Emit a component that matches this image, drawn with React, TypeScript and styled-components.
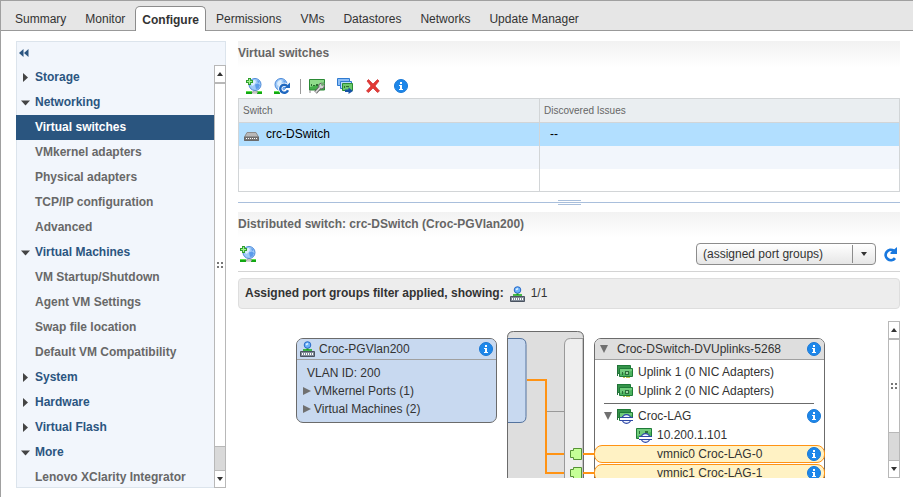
import React, { useState } from "react";
import styled, { createGlobalStyle, css } from "styled-components";

const GlobalStyle = createGlobalStyle`
  * { box-sizing: border-box; }
  body { margin: 0; background: #fff; }
  body, button, select, table {
    font-family: "Liberation Sans", Arial, sans-serif;
    font-size: 12px;
    color: #333;
  }
  button { margin: 0; padding: 0; border: 0; background: none; cursor: pointer; }
  ul, h2 { margin: 0; padding: 0; list-style: none; }
`;

/* ---------- Icons ---------- */

const Svg = styled.svg`
  display: block;
  flex: none;
`;

const Globe = () => (
  <>
    <circle cx="9" cy="6.5" r="6" fill="#9fcaf8" stroke="#4a88d8" />
    <path d="M5 6q1-4 4-4l1 2-2 3-2 1z" fill="#dceefe" />
    <path d="M9 6.5l3-1 2 1.500-1.500 3.500-2.500.5z" fill="#5b9bea" />
    <path d="M11 2l3 2-2 1z" fill="#5b9bea" />
  </>
);

const GlobeBase = () => (
  <>
    <path d="M0 13h6v3H0zM11 13h5v3h-5z" fill="#12a812" />
    <path d="M0 13h6v1H0zM11 13h5v1h-5z" fill="#5be04c" />
    <path d="M6 15q0-2 3-2t2.500 2z" fill="#e8e8e8" stroke="#888" strokeWidth=".7" />
  </>
);

const AddSwitchIcon = () => (
  <Svg width="16" height="16" viewBox="0 0 16 16" aria-hidden="true">
    <Globe />
    <GlobeBase />
    <path d="M3.500 0v7M0 3.500h7" stroke="#2f9d2c" strokeWidth="3" />
    <path d="M3.500 1v5M1 3.500h5" stroke="#a2f592" strokeWidth="1.200" />
  </Svg>
);

const RefreshSwitchIcon = () => (
  <Svg width="16" height="16" viewBox="0 0 16 16" aria-hidden="true">
    <g transform="translate(-2 0)"><Globe /></g>
    <path d="M0 13h6v3H0z" fill="#12a812" />
    <path d="M0 13h6v1H0z" fill="#5be04c" />
    <path d="M14 12.200a4 4 0 1 1-.8-4.200" fill="none" stroke="#fff" strokeWidth="4.200" />
    <path d="M14 12.200a4 4 0 1 1-.8-4.200" fill="none" stroke="#1f68c0" strokeWidth="2.400" />
    <path d="M16 4.500V10h-5.500z" fill="#1f68c0" />
  </Svg>
);

const AdapterIcon = () => (
  <Svg width="16" height="16" viewBox="0 0 16 16" aria-hidden="true">
    <path d="M.5 1.500h15V12H.5z" fill="#44ae4a" stroke="#2b8a35" />
    <path d="M1 2h14v3L1 9z" fill="#8fdb8a" />
    <path d="M2 6h1v2H2zM4 7h2v1H4zM7 6h2v2H7z" fill="#2d6e32" />
    <path d="M1 12v3" stroke="#888" />
    <path d="m6.500 14.500 4.500-5" stroke="#666" strokeWidth="3.400" />
    <circle cx="12.500" cy="8" r="2.800" fill="#d5d5d5" stroke="#666" />
    <path d="m6.500 14.500 4.500-5" stroke="#ddd" strokeWidth="1.600" />
    <path d="m12.500 7.500 2.500-3" stroke="#6faf70" strokeWidth="2" />
  </Svg>
);

const MigrateIcon = () => (
  <Svg width="16" height="16" viewBox="0 0 16 16" aria-hidden="true">
    <path d="M.5.500h12v7H.5z" fill="#8cbdf5" stroke="#2e7ad0" />
    <path d="M3.500 3.500h11v7h-11z" fill="#b9dafd" stroke="#2e7ad0" />
    <path d="M5.500 5.500h10v7h-10z" fill="#6bc96c" stroke="#2b8a35" />
    <path d="M7 8h1v2H7zM9 8h3v1H9z" fill="#2d6e32" />
    <path d="M8 11.500h3.500V9.500l4.500 3.500-4.500 3v-2H8z" fill="#1653a5" />
  </Svg>
);

const RemoveIcon = () => (
  <Svg width="14" height="14" viewBox="0 0 14 14" aria-hidden="true">
    <path d="m1 2 1.500-1.500L7 5l4.500-4.500L13 2 9 7l4.500 5-2 1.500L7 9l-4.500 4.500-2-1.500L5 7z" fill="#e33a36" stroke="#cc2c2c" strokeWidth=".7" />
  </Svg>
);

const InfoIcon = () => (
  <Svg width="14" height="14" viewBox="0 0 14 14" aria-hidden="true">
    <circle cx="7" cy="7" r="6.500" fill="#1d87ea" stroke="#1a78d4" />
    <path d="M6 3h2v2H6zM5 6h3v4h1v1H5v-1h1V7H5z" fill="#fff" />
  </Svg>
);

const SwitchIcon = () => (
  <Svg width="15" height="9" viewBox="0 0 15 9" aria-hidden="true">
    <path d="M3 .5h9l2.500 4.500v3.500H.5V5z" fill="#b9b9b9" stroke="#8c8c8c" />
    <path d="M.5 5h14v3.500H.5z" fill="#777" stroke="#6a6a6a" />
    <path d="M2 6.500h11" stroke="#fff" strokeDasharray="1 1" />
  </Svg>
);

const PortGroupIcon = () => (
  <Svg width="15" height="16" viewBox="0 0 15 16" aria-hidden="true">
    <circle cx="7.500" cy="4" r="3.300" fill="#6bb1fa" stroke="#2869c6" />
    <path d="m5.500 3 2-1 1 1-2 1.500z" fill="#e3f3ff" />
    <path d="M7.500 7.500V9" stroke="#278b2b" strokeWidth="2" />
    <path d="M3 9h9" stroke="#12a914" strokeWidth="1.500" />
    <path d="M.5 10.500h14v5H.5z" fill="#818b98" stroke="#4a5360" />
    <path d="M2 13h11" stroke="#fff" strokeWidth="2" strokeDasharray="1 1" />
  </Svg>
);

const RefreshIcon = () => (
  <Svg width="15" height="15" viewBox="0 0 15 15" aria-hidden="true">
    <path d="M12 11.200A5.200 5.200 0 1 1 10.800 3.700" fill="none" stroke="#1878df" strokeWidth="2.800" />
    <path d="M14 0v7H7.500V5.500z" fill="#1878df" />
  </Svg>
);

const NicIcon = ({ lag = false, single = false }: { lag?: boolean; single?: boolean }) => (
  <Svg width="16" height="16" viewBox="0 0 16 16" aria-hidden="true">
    {!single && (
      <>
        <path d="M.5 1.500h13v8H.5z" fill="#35944a" stroke="#1f7a38" />
        <path d="M.5 1v11" stroke="#246e39" />
      </>
    )}
    <path d={single ? "M.5 1.500h15v10H.5z" : "M2.500 4.500h13v8h-13z"} fill="#4db45f" stroke="#1f7a38" />
    <path d={single ? "M1 2h14v3L1 9z" : "M3 5h12v2L3 10z"} fill="#8bdc8f" opacity=".6" />
    {single ? (
      <path d="M3 4h1v3H3zM9 4h3v2H9z" fill="#2d6e3a" />
    ) : (
      <>
        <path d="M8 7h4v4H8zM5 8h1v3H5z" fill="#2d6e3a" />
        <path d="M9 8h2v2H9z" fill="#9fd6a2" />
      </>
    )}
    {!lag && <path d="M6 13h2v1H6zM9 13h4v1H9z" fill="#b9c24a" />}
    {lag && (
      <>
        <circle cx="9.500" cy="11" r="4.300" fill="#f1f5ff" stroke="#2f48a6" strokeWidth="1.200" />
        <path d="M3 9.500h13v3H3z" fill="#fff" />
        <path d="M3 9.500h13M3 12.500h13" stroke="#2f48a6" />
      </>
    )}
  </Svg>
);

const Caret = ({ open = false }: { open?: boolean }) => (
  <Svg width="9" height="9" viewBox="0 0 9 9" aria-hidden="true">
    <path d={open ? "M0 2.500h9L4.500 7.500z" : "M2 0v9l5-4.500z"} fill="#444" />
  </Svg>
);

const CardCaret = ({ open = false }: { open?: boolean }) => (
  <Svg width="8" height="8" viewBox="0 0 8 8" aria-hidden="true">
    <path d={open ? "M0 0h8L4 8z" : "M0 0v8l8-4z"} fill="#707070" />
  </Svg>
);

const SmallArrow = ({ up = false }: { up?: boolean }) => (
  <Svg width="6" height="4" viewBox="0 0 6 4" aria-hidden="true">
    <path d={up ? "M0 4h6L3 0z" : "M0 0h6L3 4z"} fill="#333" />
  </Svg>
);

/* ---------- Frame and tabs ---------- */

const Frame = styled.div`
  display: flex;
  flex-direction: column;
  height: 100vh;
  overflow: hidden;
  border: solid #a0a0a0;
  border-width: 1px 0 0 1px;
`;

const TabBar = styled.nav`
  display: flex;
  align-items: flex-end;
  flex: none;
  height: 30px;
  padding-left: 5px;
  background: #e6e6e6;
  border-bottom: 1px solid #999;
`;

const Tab = styled.button<{ $active: boolean }>`
  height: 25px;
  padding: 2px 8px 0;
  border: 1px solid transparent;
  border-bottom: 0;
  white-space: nowrap;
  margin-right: 1px;
  ${(p) =>
    p.$active &&
    css`
      margin-bottom: -1px;
      padding: 2px 6px 0;
      font-weight: bold;
      background: #fff;
      border-color: #8c8c8c;
      border-radius: 5px 5px 0 0;
    `}
`;

const Body = styled.div`
  display: flex;
  flex: 1;
  min-height: 0;
  gap: 12px;
  padding: 10px 13px 9px 15px;
`;

/* ---------- Sidebar ---------- */

const Sidebar = styled.aside`
  display: flex;
  flex-direction: column;
  flex: none;
  width: 210px;
  background: #f2f6fc;
  border: 1px solid #dce4ec;
`;

const Collapse = styled.button`
  display: flex;
  align-items: center;
  flex: none;
  height: 23px;
  padding: 0 0 2px 2px;
`;

const TreeArea = styled.div`
  display: flex;
  flex: 1;
  min-height: 0;
  margin: 0 -1px -1px;
`;

const Tree = styled.ul`
  flex: 1;
  overflow: hidden;
`;

const TreeItem = styled.button<{ $group: boolean; $selected: boolean }>`
  display: grid;
  grid-template-columns: 10px 1fr;
  gap: 4px;
  align-items: center;
  width: 100%;
  height: 25px;
  padding-left: 5px;
  text-align: left;
  font-weight: bold;
  white-space: nowrap;
  color: ${(p) => (p.$selected ? "#fff" : p.$group ? "#2b5580" : "#686868")};
  background: ${(p) => (p.$selected ? "#2a557f" : "transparent")};

  span {
    grid-column: 2;
    padding-bottom: 2px;
  }
`;

/* ---------- Scrollbar ---------- */

const ScrollTrack = styled.div`
  display: flex;
  flex-direction: column;
  flex: none;
  width: 12px;
  background: #d9d9d9;
  border: solid #b8b8b8;
  border-width: 0 1px;
`;

const ScrollButton = styled.button`
  display: grid;
  place-items: center;
  flex: none;
  height: 18px;
  background: #fff;
  border: solid #b8b8b8;
  border-width: 1px 0;
`;

const ScrollThumb = styled.div<{ $rest: number }>`
  display: grid;
  place-items: center;
  flex: 1;
  margin-bottom: ${(p) => p.$rest}px;
  background: #fff;
  border: solid #b8b8b8;
  border-width: 1px 0;
`;

const Scrollbar = ({ rest }: { rest: number }) => (
  <ScrollTrack>
    <ScrollButton aria-label="Scroll up"><SmallArrow up /></ScrollButton>
    <ScrollThumb $rest={rest}>
      <Svg width="6" height="6" viewBox="0 0 6 6" aria-hidden="true">
        <path d="M0 0h2v2H0zM4 0h2v2H4zM0 4h2v2H0zM4 4h2v2H4z" fill="#777" />
      </Svg>
    </ScrollThumb>
    <ScrollButton aria-label="Scroll down"><SmallArrow /></ScrollButton>
  </ScrollTrack>
);

/* ---------- Main panel ---------- */

const Main = styled.main`
  display: flex;
  flex-direction: column;
  flex: 1;
  min-width: 0;
  padding-bottom: 10px;
`;

const Heading = styled.h2`
  flex: none;
  height: 26px;
  line-height: 24px;
  font-size: 12px;
  font-weight: bold;
  color: #666;
  background: linear-gradient(#f2f2f2, #fff);
`;

const Toolbar = styled.div`
  display: flex;
  align-items: center;
  flex: none;
  gap: 12px;
  height: 31px;
  padding: 7px 8px 0;
`;

const ToolButton = styled.button`
  display: grid;
  place-items: center;
  flex: none;
  width: 16px;
  height: 16px;
`;

const Separator = styled.span`
  width: 1px;
  height: 15px;
  margin-right: -4px;
  margin-left: -2px;
  background: #999;
`;

const Grid = styled.table`
  flex: none;
  width: 100%;
  table-layout: fixed;
  border-collapse: collapse;
  border: 1px solid #d2d5d7;

  th, td {
    height: 23px;
    padding: 0 5px;
    text-align: left;
    border-right: 1px solid #d2d5d7;
  }
  th {
    height: 24px;
    padding: 0 4px;
    font-size: 10px;
    font-weight: normal;
    color: #666;
    background: #eaeef1;
    border-bottom: 1px solid #d2d5d7;
  }
  td + td { padding-left: 10px; }
`;

const SwitchColumn = styled.col`
  width: 301px;
`;

const GridRow = styled.tr<{ $tone: string }>`
  background: ${(p) => p.$tone};

  td { color: #000; }
`;

const SwitchName = styled.div`
  display: flex;
  align-items: center;
  gap: 7px;

  svg { margin-top: 4px; }
`;

const Splitter = styled.div`
  display: grid;
  place-items: center;
  flex: none;
  height: 20px;
  background: linear-gradient(#a9bfdc, #a9bfdc) 0 10px / 100% 1px no-repeat;
`;

const SplitterGrip = styled.span`
  width: 23px;
  height: 5px;
  margin-top: 1px;
  border: solid #a9bfdc;
  border-width: 1px 0;
`;

const FilterTools = styled.div`
  display: flex;
  align-items: center;
  flex: none;
  height: 34px;
  padding: 0 2px 1px;
  gap: 6px;
  border-bottom: 1px solid #d4d4d4;
`;

const SelectBox = styled.div`
  display: grid;
  grid-template-columns: 1fr 23px;
  width: 180px;
  height: 22px;
  margin-left: auto;
  border: 1px solid #8c8c8c;
  border-radius: 4px;
  background: linear-gradient(#fff, #e6e6e6);

  select {
    grid-area: 1 / 1 / 2 / 3;
    padding: 0 0 0 6px;
    border: 0;
    appearance: none;
    background: none;
  }
  > span {
    grid-area: 1 / 2;
    display: grid;
    place-items: center;
    margin: 1px 0;
    border-left: 1px solid #8c8c8c;
    pointer-events: none;
  }
`;

const FilterBar = styled.div`
  display: flex;
  align-items: center;
  flex: none;
  height: 31px;
  margin: 6px 0 12px;
  padding-left: 6px;
  gap: 6px;
  border: 1px solid #dedede;
  border-radius: 4px;
  background: #ededed;

  strong, span { padding-bottom: 2px; }
`;

/* ---------- Topology diagram ---------- */

const DiagramArea = styled.section`
  display: flex;
  flex: 1;
  min-height: 0;
`;

const Canvas = styled.div`
  position: relative;
  flex: 1;
  overflow: hidden;
`;

const Wires = styled.svg`
  position: absolute;
  left: 269px;
  top: 10px;
`;

const Card = styled.div<{ $tone: string }>`
  position: absolute;
  border: 1px solid #6b6b6b;
  border-radius: 7px;
  background: ${(p) => p.$tone};
`;

const GroupCard = styled(Card)`
  left: 58px;
  top: 17px;
  width: 201px;
  padding-bottom: 4px;
`;

const UplinkCard = styled(Card)`
  left: 356px;
  top: 17px;
  width: 231px;
  height: 200px;
`;

const CardHeader = styled.div<{ $tone: string }>`
  display: flex;
  align-items: center;
  height: 21px;
  padding: 0 2px 0 3px;
  gap: 4px;
  background: ${(p) => p.$tone};
  border-bottom: 1px solid #a0a0a0;
  border-radius: 6px 6px 0 0;

  > :last-child { margin-left: auto; }
`;

const UplinkHeader = styled(CardHeader)`
  gap: 9px;
  padding-left: 5px;
`;

const VlanLabel = styled.div`
  padding: 5px 10px 0;
  line-height: 17px;
`;

const Expander = styled.button`
  display: flex;
  align-items: center;
  gap: 3px;
  height: 18px;
  padding: 0 0 1px 6px;
`;

const UplinkRow = styled.div<{ $indent: number }>`
  display: flex;
  align-items: center;
  gap: 5px;
  height: 19px;
  padding: 0 2px 0 ${(p) => p.$indent}px;

  > button:last-child { margin-left: auto; }
`;

const UplinkList = styled.div`
  padding: 2px 0 3px;
`;

const Rule = styled.div`
  height: 1px;
  margin: 0 10px 2px 9px;
  background: #6b6b6b;
`;

const NicPill = styled.div`
  display: flex;
  align-items: center;
  justify-content: space-between;
  height: 18px;
  margin: 1px -1px 0;
  padding: 0 2px 0 62px;
  border: 1px solid #ff9314;
  border-radius: 8px;
  background: #fff2c4;
`;

const InfoButton = ({ label }: { label: string }) => (
  <ToolButton aria-label={label}><InfoIcon /></ToolButton>
);

/* ---------- Data ---------- */

const tabs = ["Summary", "Monitor", "Configure", "Permissions", "VMs", "Datastores", "Networks", "Update Manager"];

const tree: { label: string; group?: boolean; open?: boolean }[] = [
  { label: "Storage", group: true },
  { label: "Networking", group: true, open: true },
  { label: "Virtual switches" },
  { label: "VMkernel adapters" },
  { label: "Physical adapters" },
  { label: "TCP/IP configuration" },
  { label: "Advanced" },
  { label: "Virtual Machines", group: true, open: true },
  { label: "VM Startup/Shutdown" },
  { label: "Agent VM Settings" },
  { label: "Swap file location" },
  { label: "Default VM Compatibility" },
  { label: "System", group: true },
  { label: "Hardware", group: true },
  { label: "Virtual Flash", group: true },
  { label: "More", group: true, open: true },
  { label: "Lenovo XClarity Integrator" },
];

export default function App() {
  const [tab, setTab] = useState("Configure");
  const [page, setPage] = useState("Virtual switches");

  return (
    <Frame>
      <GlobalStyle />
      <TabBar>
        {tabs.map((name) => (
          <Tab key={name} $active={name === tab} onClick={() => setTab(name)}>{name}</Tab>
        ))}
      </TabBar>
      <Body>
        <Sidebar>
          <Collapse aria-label="Collapse sidebar">
            <Svg width="10" height="8" viewBox="0 0 10 8" aria-hidden="true">
              <path d="M4.500 0v8L0 4zM9.500 0v8L5 4z" fill="#2b5580" />
            </Svg>
          </Collapse>
          <TreeArea>
            <Tree>
              {tree.map((item) => (
                <li key={item.label}>
                  <TreeItem
                    $group={!!item.group}
                    $selected={item.label === page}
                    onClick={() => !item.group && setPage(item.label)}
                  >
                    {item.group && <Caret open={item.open} />}
                    <span>{item.label}</span>
                  </TreeItem>
                </li>
              ))}
            </Tree>
            <Scrollbar rest={23} />
          </TreeArea>
        </Sidebar>

        <Main>
          <Heading>Virtual switches</Heading>
          <Toolbar>
            <ToolButton aria-label="Add host networking"><AddSwitchIcon /></ToolButton>
            <ToolButton aria-label="Refresh networking"><RefreshSwitchIcon /></ToolButton>
            <Separator />
            <ToolButton aria-label="Manage physical adapters"><AdapterIcon /></ToolButton>
            <ToolButton aria-label="Migrate networking"><MigrateIcon /></ToolButton>
            <ToolButton aria-label="Remove switch"><RemoveIcon /></ToolButton>
            <InfoButton label="Switch details" />
          </Toolbar>
          <Grid>
            <colgroup>
              <SwitchColumn />
              <col />
            </colgroup>
            <thead>
              <tr><th>Switch</th><th>Discovered Issues</th></tr>
            </thead>
            <tbody>
              <GridRow $tone="#b2dfff">
                <td><SwitchName><SwitchIcon />crc-DSwitch</SwitchName></td>
                <td>--</td>
              </GridRow>
              <GridRow $tone="#f2f6fc"><td /><td /></GridRow>
              <GridRow $tone="#fff"><td /><td /></GridRow>
            </tbody>
          </Grid>
          <Splitter><SplitterGrip /></Splitter>
          <Heading>Distributed switch: crc-DSwitch (Croc-PGVlan200)</Heading>
          <FilterTools>
            <ToolButton aria-label="Add host networking"><AddSwitchIcon /></ToolButton>
            <SelectBox>
              <select aria-label="Port group filter">
                <option>(assigned port groups)</option>
              </select>
              <span><SmallArrow /></span>
            </SelectBox>
            <ToolButton aria-label="Refresh"><RefreshIcon /></ToolButton>
          </FilterTools>
          <FilterBar>
            <strong>Assigned port groups filter applied, showing:</strong>
            <PortGroupIcon />
            <span>1/1</span>
          </FilterBar>
          <DiagramArea>
            <Canvas>
              <Wires width="88" height="180" viewBox="0 0 88 180" aria-hidden="true">
                <path d="M.5 180V6.500q0-6 6-6h64q6 0 6 6V180" fill="#dedede" stroke="#6b6b6b" />
                <path d="M1 7.500h12q6 0 6 6v72q0 6-6 6H1" fill="#c8d9f0" stroke="#54739e" />
                <path d="M57.500 180V14q0-6.500 6-6.500H76V180" fill="#eee" stroke="#999" />
                <path d="M39 80.500h18" stroke="#999" />
                <path d="M76.500 8V180" stroke="#6b6b6b" />
                <path d="M20 49h19v93M38 123h19M38 142h19M76 123h12M76 142h12" fill="none" stroke="#ff9314" strokeWidth="2" />
                <path d="M66.500 117.500h8v11h-8v-2h-3v-7h3zM66.500 136.500h8v11h-8v-2h-3v-7h3z" fill="#c5ff97" stroke="#559335" />
              </Wires>
              <GroupCard $tone="#c8d9f0">
                <CardHeader $tone="#c8d9f0">
                  <PortGroupIcon />
                  <span>Croc-PGVlan200</span>
                  <InfoButton label="Port group details" />
                </CardHeader>
                <VlanLabel>VLAN ID: 200</VlanLabel>
                <Expander><CardCaret />VMkernel Ports (1)</Expander>
                <Expander><CardCaret />Virtual Machines (2)</Expander>
              </GroupCard>
              <UplinkCard $tone="#fff">
                <UplinkHeader $tone="#dedede">
                  <CardCaret open />
                  <span>Croc-DSwitch-DVUplinks-5268</span>
                  <InfoButton label="Uplink group details" />
                </UplinkHeader>
                <UplinkList>
                  <UplinkRow $indent={22}><NicIcon />Uplink 1 (0 NIC Adapters)</UplinkRow>
                  <UplinkRow $indent={22}><NicIcon />Uplink 2 (0 NIC Adapters)</UplinkRow>
                </UplinkList>
                <Rule />
                <UplinkRow $indent={9}>
                  <CardCaret open />
                  <NicIcon lag />Croc-LAG
                  <InfoButton label="Croc-LAG details" />
                </UplinkRow>
                <UplinkRow $indent={41}><NicIcon lag single />10.200.1.101</UplinkRow>
                <NicPill>vmnic0 Croc-LAG-0<InfoButton label="vmnic0 details" /></NicPill>
                <NicPill>vmnic1 Croc-LAG-1<InfoButton label="vmnic1 details" /></NicPill>
              </UplinkCard>
            </Canvas>
            <Scrollbar rest={27} />
          </DiagramArea>
        </Main>
      </Body>
    </Frame>
  );
}
